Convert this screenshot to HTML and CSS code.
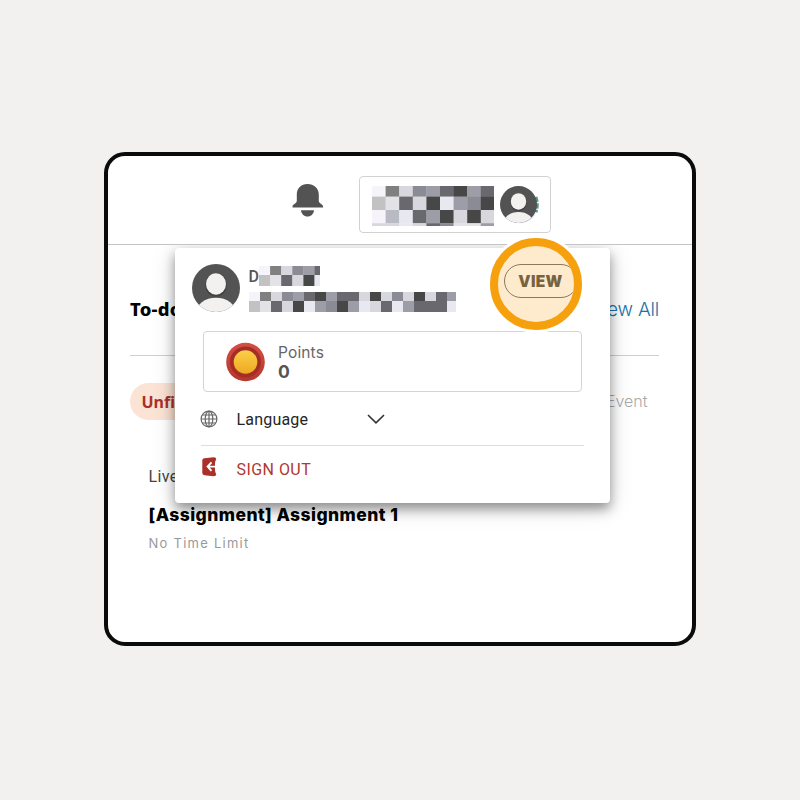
FILE: index.html
```
<!DOCTYPE html>
<html lang="en">
<head>
<meta charset="utf-8">
<title>To-do</title>
<link rel="stylesheet" href="styles.css">
</head>
<body>
<main class="frame">
  <header class="topbar">
    <svg class="bell" viewBox="0 0 32 34"><path fill="#535353" d="M16 0C22.5 0 27.300 4.600 27.300 10.500V17c0 2.500 4.300 3.200 4.300 5.500v1H1v-1c0-2.300 4.300-3 4.300-5.500v-6.500C5.300 4.600 9.500 0 16 0Z"/><path fill="#535353" d="M9.500 26.300H22.500C22.200 30 19.600 32.600 16 32.600S9.800 30 9.500 26.300Z"/></svg>
    <div class="account">
      <svg class="mosaic" width="122" height="40" data-cell="13.600" data-rows="10.600,13.400,13.200,2.800" data-map="abcdefgef/hifcgjedg/akjfegcgc/ccjcfdiie"></svg>
      <svg class="account-avatar" viewBox="0 0 40 38"><circle cx="21" cy="19.500" r="17.800" fill="#e4e5fb"/><path d="M36.500 11q2.500 8 0 15" fill="none" stroke="#4f9a83" stroke-width="4" stroke-dasharray="5 1.500"/><use href="#person" x="1" width="37" height="37"/></svg>
    </div>
  </header>

  <section class="todo">
    <div class="todo-head"><h1>To-do</h1><a class="all">View All</a></div>
    <div class="tabs"><span class="pill">Unfinished</span><span class="event">Event</span></div>
    <article class="task">
      <p class="kind">Live</p>
      <h2>[Assignment] Assignment 1</h2>
      <p class="limit">No Time Limit</p>
    </article>
  </section>

  <aside class="menu">
    <div class="profile">
      <svg class="avatar" viewBox="0 0 48 48">
        <symbol id="person" viewBox="0 0 48 48"><clipPath id="disc"><circle cx="24" cy="24" r="24"/></clipPath><g clip-path="url(#disc)"><path fill="#535353" d="M0 0h48v48H0z"/><ellipse cx="24" cy="21" rx="10.700" ry="11.800" fill="#424242"/><ellipse cx="24" cy="20" rx="10" ry="10.700" fill="#f2f1f0"/><ellipse cx="24" cy="49" rx="20" ry="15.300" fill="#f2f1f0"/></g></symbol>
        <use href="#person" width="48" height="48"/>
      </svg>
      <div class="identity">
        <div class="name"><span>D</span><svg class="mosaic" width="61" height="20" data-cell="11.100" data-rows="9,11" data-map="abcdef/hifcgj"></svg></div>
        <svg class="mosaic" width="207" height="20" data-cell="11" data-rows="9,11" data-map="abcdefgeffcgcdcgcfe/hifcgjedgejcfjefffjf"></svg>
      </div>
    </div>
    <div class="points">
      <svg class="coin" viewBox="0 0 40 40">
        <defs><linearGradient id="gold" x2="0" y2="1"><stop stop-color="#fbcf48"/><stop offset="1" stop-color="#efa822"/></linearGradient><linearGradient id="rim" x2="0" y2="1"><stop stop-color="#d44e42"/><stop offset="1" stop-color="#b5372e"/></linearGradient></defs>
        <circle cx="19.500" cy="20" r="19.300" fill="url(#rim)"/><circle cx="19.500" cy="20" r="15.500" fill="#a42e27"/><circle cx="19.500" cy="20" r="11.800" fill="url(#gold)"/>
      </svg>
      <div><p class="points-label">Points</p><p class="points-value">0</p></div>
    </div>
    <div class="row language">
      <svg class="globe" viewBox="0 0 18 18" fill="none" stroke="#666" stroke-width="1.200"><circle cx="9" cy="9" r="7.900"/><ellipse cx="9" cy="9" rx="3.800" ry="7.900"/><path d="M9 1v16M1 9h16M2.300 5h13.400M2.300 13h13.400"/></svg>
      <span>Language</span>
      <svg class="chevron" viewBox="0 0 18 10"><path d="M1 1l8 7.800L17 1" fill="none" stroke="#333" stroke-width="1.600"/></svg>
    </div>
    <div class="row signout">
      <svg class="exit" viewBox="0 0 16 20"><path fill="#a93129" d="M3.600 1.200 12.500.2Q15.200 0 15.200 2.200 14 4 14 6.500V13Q14 15.500 15.200 17.200 15.200 19.300 12.500 19.200L3.600 18.300Q1.300 18 1.300 16V3.300Q1.300 1.400 3.600 1.200Z"/><path d="M10.500 5.300 6.600 9.600l3.900 4.300M7 9.600h8.500" fill="none" stroke="#fff" stroke-width="1.900"/></svg>
      <span>SIGN OUT</span>
    </div>
  </aside>

  <div class="spotlight"><span class="view">VIEW</span></div>
</main>
<script src="mosaic.js"></script>
</body>
</html>
```
FILE: styles.css
```
* { box-sizing: border-box; }
body { margin: 0; background: #f2f1ef; font-family: Roboto, "Liberation Sans", sans-serif; }
h1, h2, p { margin: 0; }
svg { display: block; flex: none; }
.frame { position: relative; width: 592px; height: 494px; margin: 152px auto 0; border: 4px solid #0b0b0b; border-radius: 21px; background: #fff; overflow: hidden; }
.topbar { display: flex; height: 89px; padding: 20px 141px 0 183px; justify-content: space-between; align-items: flex-start; border-bottom: 1px solid #c4c4c4; }
.bell { width: 33px; height: 34px; margin-top: 8px; }
.account { display: flex; width: 192px; height: 57px; padding: 9px 12px; gap: 5px; border: 1px solid #d2d2d2; border-radius: 4px; background: #fff; }
.account-avatar { width: 40px; height: 38px; }
.todo { padding: 0 33px 0 22px; }
.todo-head { display: flex; height: 111px; padding: 51px 0 0; justify-content: space-between; border-bottom: 1px solid #cfcfcf; }
.todo-head h1 { font: 800 18.500px/26px "Noto Sans", sans-serif; letter-spacing: .2px; color: #000; }
.all { padding-top: 1px; font: 300 19px/26px Inter, sans-serif; letter-spacing: -.2px; color: #1672ac; }
.tabs { display: flex; margin-top: 27px; height: 37px; justify-content: space-between; align-items: center; padding-right: 11.500px; }
.pill { height: 37px; padding: 0 11.500px; border-radius: 19px; background: #fbe4d5; color: #a93129; font: 700 16px/39px "Noto Sans", sans-serif; }
.event { color: #aaa; font: 300 16px/39px Inter, sans-serif; }
.task { padding: 46px 0 0 18.500px; }
.kind { font: 400 16px/21px Roboto, sans-serif; letter-spacing: .4px; color: #444; }
.task h2 { margin-top: 16px; font: 800 17.500px/24px Inter, sans-serif; letter-spacing: .44px; color: #000; white-space: nowrap; }
.limit { margin-top: 7px; font: 400 13px/18px Inter, sans-serif; letter-spacing: 1.250px; color: #999; }
.menu { position: absolute; left: 67px; top: 92px; width: 435px; height: 255px; padding: 16px 26px 0; border-radius: 4px; background: #fff; box-shadow: 0 6px 12px rgba(0,0,0,.38), 0 4px 26px rgba(0,0,0,.14); clip-path: inset(-3px -40px -40px -40px); }
.profile { display: flex; gap: 8.500px; margin-left: -9px; height: 67px; }
.avatar { width: 48px; height: 48px; }
.name { display: flex; height: 28px; padding-top: 2px; }
.name span { width: 10.500px; font: 500 16px/21px Roboto, sans-serif; color: #555; }
.points { display: flex; width: 379px; height: 61px; margin-left: 2px; padding: 10px 22px; gap: 12px; border: 1px solid #d4d4d4; border-radius: 4px; }
.coin { width: 40px; height: 40px; }
.points-label { padding-top: 1px; font: 400 15.500px/20px Inter, sans-serif; letter-spacing: .15px; color: #666; }
.points-value { font: 700 17.500px/18px Inter, sans-serif; color: #555; }
.row { display: flex; align-items: center; font-size: 16px; }
.language { height: 54px; width: 383px; border-bottom: 1px solid #dedede; color: #262626; }
.globe { width: 18px; height: 18px; margin: 1px 0 0 -1px; }
.row span { width: 130px; margin-left: 18.500px; }
.language span { padding-top: 2px; letter-spacing: .2px; }
.chevron { width: 18px; height: 10px; }
.signout { height: 47px; color: #b2372e; }
.exit { width: 16px; height: 20px; margin-top: -6px; }
.signout span { margin-left: 19.500px; letter-spacing: .45px; }
.spotlight { position: absolute; left: 382px; top: 82px; display: flex; width: 92px; height: 92px; padding: 18px 0 0 5.500px; border: 8px solid #f5a00c; border-radius: 50%; background: #feebce; overflow: hidden; box-shadow: 0 0 0 3px #fff; }
.view { flex: none; width: 74px; height: 34px; border: 1px solid #8b795a; border-radius: 17px; text-align: center; font: 900 15.500px/33px Inter, sans-serif; letter-spacing: .3px; color: #78633f; }
```
FILE: mosaic.js
```
const shades = { a: '#f6f4fa', b: '#808080', c: '#d8d7dd', d: '#8b8b95', e: '#9d9da7', f: '#69686e', g: '#474748', h: '#c2c2c3', i: '#e2e2e7', j: '#e8e8f1', k: '#b9bbc4' };
document.querySelectorAll('.mosaic').forEach(svg => {
  const cell = Number(svg.dataset.cell);
  const heights = svg.dataset.rows.split(',').map(Number);
  let y = 0;
  svg.dataset.map.split('/').forEach((row, r) => {
    [...row].forEach((key, c) => {
      const rect = document.createElementNS('http://www.w3.org/2000/svg', 'rect');
      const box = { x: c * cell, y, width: cell + 0.3, height: heights[r] + 0.3, fill: shades[key] };
      for (const name in box) rect.setAttribute(name, box[name]);
      svg.append(rect);
    });
    y += heights[r];
  });
});
```
